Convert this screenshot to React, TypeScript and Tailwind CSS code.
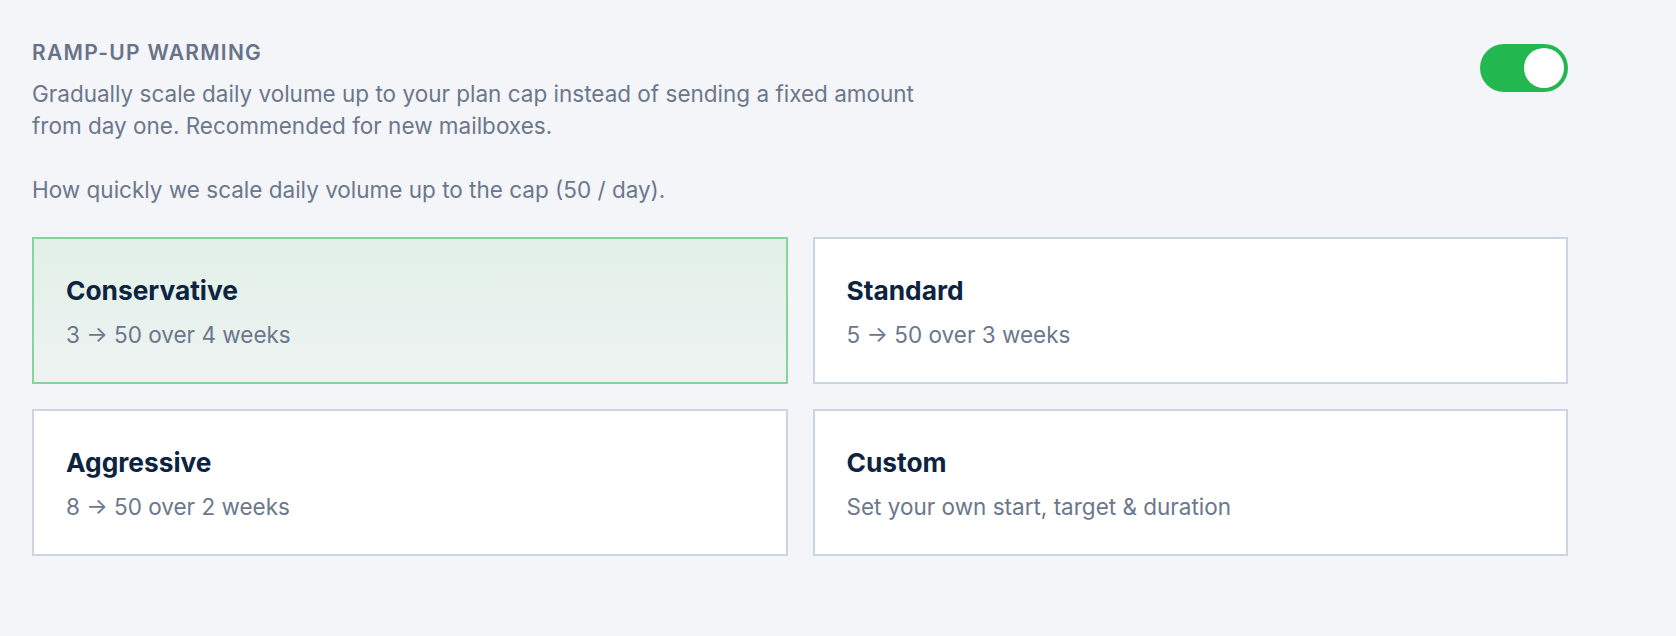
import React from "react";

const options = [
  { title: "Conservative", sub: "3 → 50 over 4 weeks", selected: true },
  { title: "Standard", sub: "5 → 50 over 3 weeks", selected: false },
  { title: "Aggressive", sub: "8 → 50 over 2 weeks", selected: false },
  { title: "Custom", sub: "Set your own start, target & duration", selected: false },
];

export default function App() {
  return (
    <div
      className="min-h-[636px] w-full bg-[#f3f5f9] pl-[32px] pt-[39px]"
      style={{ fontFamily: "Inter, 'Noto Sans', sans-serif" }}
    >
      <div className="w-[1536px]">
        <div className="flex items-start justify-between">
          <div>
            <h2 className="text-[21px] font-semibold uppercase leading-[28px] tracking-[0.06em] text-[#687387]">
              Ramp-up warming
            </h2>
            <p className="mt-[11px] w-[940px] text-[22.5px] leading-[32px] text-[#6b778c]">
              Gradually scale daily volume up to your plan cap instead of sending a fixed amount
              <br />
              from day one. Recommended for new mailboxes.
            </p>
          </div>
          <button className="mt-[5px] flex h-[48px] w-[88px] items-center justify-end rounded-full bg-[#22b84f] p-[4px]">
            <span className="block h-[40px] w-[40px] rounded-full bg-white" />
          </button>
        </div>
        <p className="mt-[32px] text-[22.5px] leading-[32px] text-[#6b778c]">
          How quickly we scale daily volume up to the cap (50 / day).
        </p>
        <div className="mt-[31px] grid grid-cols-2 gap-[25px]">
          {options.map((o) => (
            <div
              key={o.title}
              className={
                o.selected
                  ? "h-[147px] border-2 border-[#86d49a] bg-gradient-to-b from-[#e2f0e8] to-[#eef3f2] px-[32px] pt-[36px]"
                  : "h-[147px] border-2 border-[#cbd5e1] bg-white px-[32px] pt-[36px]"
              }
            >
              <div className="text-[26.3px] font-bold leading-[32px] text-[#0d2440]">{o.title}</div>
              <div className="mt-[12px] text-[22.5px] leading-[32px] text-[#6b778c]">{o.sub}</div>
            </div>
          ))}
        </div>
      </div>
    </div>
  );
}
